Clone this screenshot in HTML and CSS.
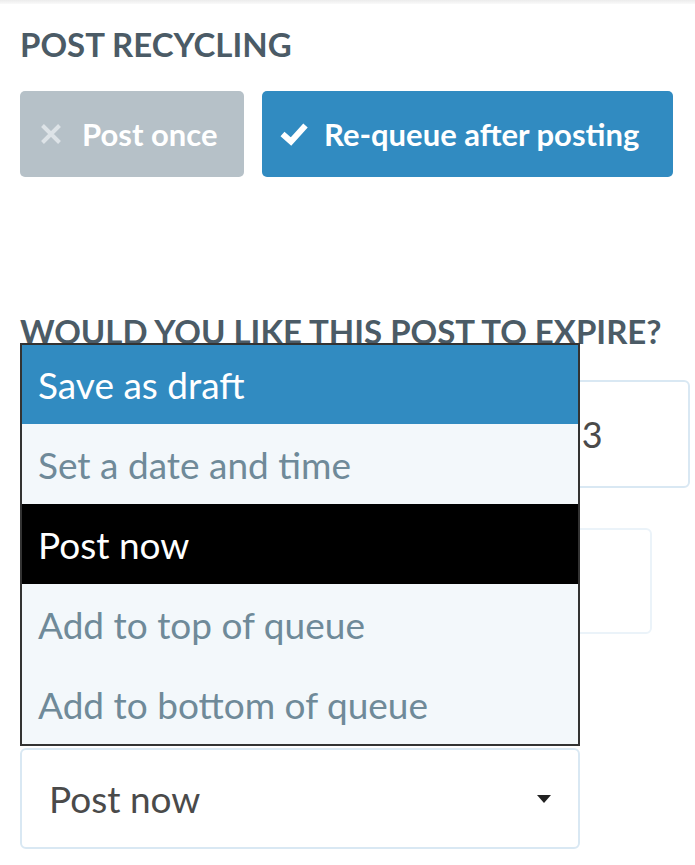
FILE: index.html
```html
<!DOCTYPE html>
<html lang="en">
<head>
    <meta charset="UTF-8">
    <meta name="viewport" content="width=device-width, initial-scale=1.0">
    <title>Post Settings</title>
    <link rel="stylesheet" href="styles.css">
</head>
<body>
    <div class="topbar"></div>
    <div class="page">
        <section class="recycling">
            <h2>Post Recycling</h2>
            <div class="toggle-row">
                <div class="toggle toggle-off">
                    <svg class="icon-x" width="22" height="22" viewBox="0 0 22 22"><path d="M2.5 2.5 L19.5 19.5 M19.5 2.5 L2.5 19.5" stroke="#dde3e7" stroke-width="4"/></svg>
                    <span>Post once</span>
                </div>
                <div class="toggle toggle-on">
                    <svg class="icon-check" width="30" height="24" viewBox="0 0 30 24"><path d="M3.5 12 L12 19.5 L26.5 3.5" fill="none" stroke="#ffffff" stroke-width="6"/></svg>
                    <span>Re-queue after posting</span>
                </div>
            </div>
        </section>

        <section class="expire">
            <h2>Would you like this post to expire?</h2>
            <div class="field field-date"><span>11/03/2023</span></div>
            <div class="field field-time"></div>
            <div class="field-gap"></div>
            <div class="select">
                <span>Post now</span>
                <span class="caret"></span>
            </div>

            <ul class="options">
                <li class="option selected">Save as draft</li>
                <li class="option">Set a date and time</li>
                <li class="option hover">Post now</li>
                <li class="option">Add to top of queue</li>
                <li class="option">Add to bottom of queue</li>
            </ul>
        </section>
    </div>
</body>
</html>
```

FILE: styles.css
```css
body {
    margin: 0;
    font-family: Lato, "Open Sans", sans-serif;
    background-color: #ffffff;
    color: #4a4a4a;
}
.topbar {
    height: 4px;
    background: linear-gradient(#ececec, #fafafa);
}
.page {
    padding: 0 20px;
}
h2 {
    margin: 0;
    font-size: 33px;
    line-height: 40px;
    font-weight: 700;
    text-transform: uppercase;
    white-space: nowrap;
    color: #4b5b66;
}
.recycling {
    padding-top: 20px;
}
.toggle-row {
    display: flex;
    gap: 18px;
    margin-top: 27px;
}
.toggle {
    display: flex;
    align-items: center;
    height: 86px;
    padding: 0 20px;
    box-sizing: border-box;
    border-radius: 5px;
    color: #ffffff;
    font-size: 31px;
    font-weight: 700;
}
.toggle-off {
    width: 224px;
    background-color: #b6c1c8;
}
.toggle-on {
    width: 411px;
    padding-left: 17px;
    background-color: #318bc1;
}
.icon-x {
    margin-right: 20px;
}
.icon-check {
    margin-right: 15px;
}

.expire {
    position: relative;
    margin-top: 134px;
}
.field {
    box-sizing: border-box;
    border: 2px solid #d9e8f3;
    border-radius: 6px;
    display: flex;
    align-items: center;
    font-size: 36px;
    color: #4a4a4a;
}
.field-date {
    width: 670px;
    height: 108px;
    margin-top: 29px;
    padding-left: 381px;
}
.field-time {
    width: 632px;
    height: 106px;
    margin-top: 40px;
    border-color: #ebf3f9;
}
.field-gap {
    height: 114px;
}
.select {
    display: flex;
    align-items: center;
    justify-content: space-between;
    width: 560px;
    height: 101px;
    box-sizing: border-box;
    padding: 0 27px;
    border: 2px solid #d9e8f3;
    border-radius: 6px;
    font-size: 37px;
    color: #4a4a4a;
}
.caret {
    width: 0;
    height: 0;
    border-left: 7px solid transparent;
    border-right: 7px solid transparent;
    border-top: 8px solid #222222;
}

.options {
    position: absolute;
    top: 32px;
    left: 0;
    width: 560px;
    margin: 0;
    padding: 0;
    list-style: none;
    box-sizing: border-box;
    border: 2px solid #333333;
    background-color: #f3f8fb;
}
.option {
    height: 80px;
    padding-left: 16px;
    display: flex;
    align-items: center;
    font-size: 37px;
    color: #6f8a99;
}
.option.selected {
    height: 79px;
    background-color: #318bc1;
    color: #ffffff;
}
.option.hover {
    background-color: #000000;
    color: #ffffff;
}
```
